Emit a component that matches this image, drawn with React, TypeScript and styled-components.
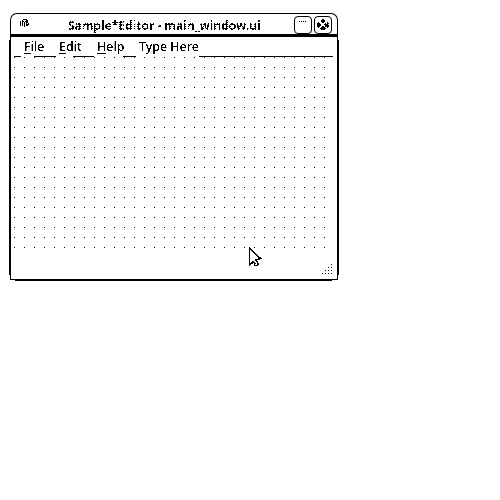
import React from 'react';
import styled, { createGlobalStyle } from 'styled-components';

const Global = createGlobalStyle`
  * { box-sizing: border-box; }
  body { margin: 0; background: #fff; color: #000; font-family: "Noto Sans", sans-serif; }
`;
const Desktop = styled.main`
  width: 500px; height: 500px; padding: 13px 0 0 9px; overflow: hidden; background: #fff;
`;
const Window = styled.section`
  position: relative; width: 330px; height: 268px; display: flex; flex-direction: column;
`;
const TitleBar = styled.header`
  height: 24px; width: 328px; margin-left: 1px; flex: none; display: flex; align-items: flex-start;
  border: 1px solid #000; border-bottom-width: 3px; border-radius: 7px 7px 0 0;
  padding: 2px 5px 0 9px;
`;
const Title = styled.h1`
  display: flex; margin: 1px 0 0; flex: 1; padding-left: 38px; height: 17px; background: #fff;
  font-size: 12px; line-height: 18px; font-weight: 700; white-space: nowrap; filter: contrast(8);
`;
const TitleText = styled.span`
  color: transparent;
  background: conic-gradient(from 270deg at 1px 1px, #fff 90deg, #000 0) 0 0 / 3px 2px;
  background-clip: text;
  -webkit-background-clip: text;
`;
const Button = styled.button`
  width: 18px; height: 18px; margin-left: 2px; padding: 0; flex: none; display: flex;
  border: 1px solid #000; border-radius: 4px; background: #fff;
`;
const Body = styled.div`
  flex: 1; margin: 0 1px; display: flex; flex-direction: column;
  border: 1px solid #000; border-top: 0; margin-bottom: 1px; padding-left: 3px;
`;
const MenuBar = styled.nav`
  height: 20px; width: 319px; display: flex; gap: 14px; padding-left: 10px; background: #fff;
  font-size: 12.4px; font-weight: 500; line-height: 20px; filter: contrast(8);
`;
const MenuItem = styled.span<{ $width: number }>`
  width: ${p => p.$width}px; white-space: nowrap;
  u { text-decoration-thickness: 1px; text-underline-offset: 2px; }
`;
const Canvas = styled.div`
  width: 319px; height: 192px;
  background: conic-gradient(from 270deg at 1px 1px, #000 90deg, transparent 0) 0 0 / 10px 10px;
`;
const Edge = styled.i<{ $x: number; $y: number; $w: number; $h: number }>`
  position: absolute; left: ${p => p.$x}px; top: ${p => p.$y}px;
  width: ${p => p.$w}px; height: ${p => p.$h}px; background: #000;
`;
const Overlay = styled.div<{ $x: number; $y: number }>`
  position: absolute; left: ${p => p.$x}px; top: ${p => p.$y}px; display: flex;
`;

const Bitmap = ({ rows }: { rows: string[] }) => (
  <svg width={rows[0].length} height={rows.length} shapeRendering="crispEdges">
    {rows.flatMap((row, y) => [...row].map((c, x) =>
      c === ' ' ? null : <rect key={`${x}-${y}`} x={x} y={y} width="1" height="1" fill={c === '#' ? '#000' : '#fff'} />
    ))}
  </svg>
);

const logo = [
  '          ',
  '          ',
  '          ',
  '   ####   ',
  '  #   ##  ',
  '# ## ###  ',
  '# # # ##  ',
  '# # # # # ',
  '# # # ### ',
  '# # # ##  ',
  '    #     ',
];
const minimise = ['                ', '                ', '                ', '                ', '    # # # #     '];
const close = [
  '                ',
  '                ',
  '       ##       ',
  '      ####      ',
  '      ####      ',
  '   #   ##   #   ',
  '  ###     # ##  ',
  '  ####   ####   ',
  '  ####    ####  ',
  '  ###  ## ####  ',
  '   #  ####  #   ',
  '     ######     ',
  '      ####      ',
  '                ',
];
const grip = [
  '         #',
  '          ',
  '          ',
  '      #  #',
  '          ',
  '          ',
  '   #  #  #',
  '          ',
  '          ',
  '#  #  #  #',
];
const cursor = [
  '#            ',
  '##           ',
  '###          ',
  '#.##         ',
  '#..##        ',
  '#...##       ',
  '#....##      ',
  '#.....##     ',
  '#......##    ',
  '#.......##   ',
  '#........### ',
  '#........####',
  '#.....#####  ',
  '#.....##     ',
  '#..##..##    ',
  '#.####..#    ',
  '####.##.##   ',
  '##   #..##   ',
  '#    ####    ',
];

const title = 'Sample*Editor - main_window.ui';
const menus = [
  { key: 'F', rest: 'ile', width: 21 },
  { key: 'E', rest: 'dit', width: 24 },
  { key: 'H', rest: 'elp', width: 28 },
];

export default function App() {
  return (
    <Desktop>
      <Global />
      <Window>
        <TitleBar>
          <Bitmap rows={logo} />
          <Title>
            <TitleText>{title}</TitleText>
          </Title>
          <Button aria-label="Minimise"><Bitmap rows={minimise} /></Button>
          <Button aria-label="Close"><Bitmap rows={close} /></Button>
        </TitleBar>
        <Body>
          <MenuBar>
            {menus.map(m => <MenuItem key={m.key} $width={m.width}><u>{m.key}</u>{m.rest}</MenuItem>)}
            <MenuItem $width={60}>Type Here</MenuItem>
          </MenuBar>
          <Canvas />
        </Body>
        <Edge $x={0} $y={27} $w={1} $h={235} />
        <Edge $x={329} $y={27} $w={1} $h={235} />
        <Edge $x={6} $y={267} $w={317} $h={1} />
        <Edge $x={5} $y={43} $w={7} $h={1} />
        <Edge $x={25} $y={43} $w={22} $h={1} />
        <Edge $x={64} $y={43} $w={21} $h={1} />
        <Edge $x={114} $y={43} $w={13} $h={1} />
        <Edge $x={190} $y={43} $w={134} $h={1} />
        <Overlay $x={313} $y={251}><Bitmap rows={grip} /></Overlay>
        <Overlay $x={240} $y={234}><Bitmap rows={cursor} /></Overlay>
      </Window>
    </Desktop>
  );
}
